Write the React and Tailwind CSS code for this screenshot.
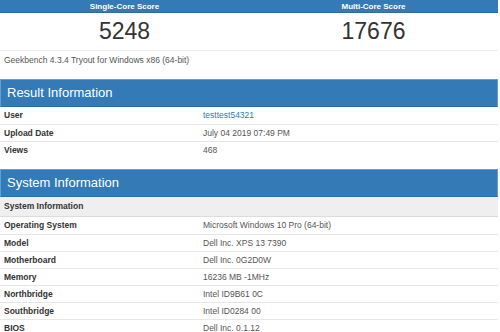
import React from "react";

const font = { fontFamily: '"Liberation Sans", Arial, sans-serif' };

function Row({ label, value, link }) {
  return (
    <div className="flex h-[17px] items-center border-t border-[#e6e6e6]">
      <div className="w-[203px] shrink-0 pl-[4px] text-[8.5px] font-bold text-[#333]">{label}</div>
      <div className={`text-[8.5px] ${link ? "text-[#337ab7]" : "text-[#555]"}`}>{value}</div>
    </div>
  );
}

function Header({ title }) {
  return (
    <div className="flex h-[28px] items-center border border-[#6b9dcc] border-b-[#2e6da4] bg-[#337ab7] pl-[6px] text-[13px] text-white">
      {title}
    </div>
  );
}

export default function App() {
  return (
    <div className="h-[332px] w-[500px] overflow-hidden bg-white" style={font}>
      <div className="w-[498px]">
        {/* score table */}
        <div className="border-b border-[#ececec]">
          <div className="flex h-[13px] items-center border-b border-[#2e6da4] bg-[#337ab7] text-[8px] font-bold leading-[9px] text-white">
            <div className="w-1/2 text-center">Single-Core Score</div>
            <div className="w-1/2 text-center">Multi-Core Score</div>
          </div>
          <div className="flex h-[37px] items-center text-[23px] text-[#333]">
            <div className="w-1/2 text-center">5248</div>
            <div className="w-1/2 text-center">17676</div>
          </div>
        </div>
        <div className="flex h-[18px] items-center pl-[4px] text-[8.5px] text-[#555]">
          Geekbench 4.3.4 Tryout for Windows x86 (64-bit)
        </div>
        <div className="h-[10px]" />

        <Header title="Result Information" />
        <div>
          <div className="flex h-[17px] items-center">
            <div className="w-[203px] shrink-0 pl-[4px] text-[8.5px] font-bold text-[#333]">User</div>
            <div className="text-[8.5px] text-[#337ab7]">testtest54321</div>
          </div>
          <Row label="Upload Date" value="July 04 2019 07:49 PM" />
          <Row label="Views" value="468" />
        </div>
        <div className="h-[11px]" />

        <Header title="System Information" />
        <div className="flex h-[20px] items-center border-b border-[#dcdcdc] bg-[#efefef] pl-[4px] text-[8.5px] font-bold text-[#333]">
          System Information
        </div>
        <div className="flex h-[17px] items-center">
          <div className="w-[203px] shrink-0 pl-[4px] text-[8.5px] font-bold text-[#333]">Operating System</div>
          <div className="text-[8.5px] text-[#555]">Microsoft Windows 10 Pro (64-bit)</div>
        </div>
        <Row label="Model" value="Dell Inc. XPS 13 7390" />
        <Row label="Motherboard" value="Dell Inc. 0G2D0W" />
        <Row label="Memory" value="16236 MB -1MHz" />
        <Row label="Northbridge" value="Intel ID9B61 0C" />
        <Row label="Southbridge" value="Intel ID0284 00" />
        <Row label="BIOS" value="Dell Inc. 0.1.12" />
      </div>
    </div>
  );
}
